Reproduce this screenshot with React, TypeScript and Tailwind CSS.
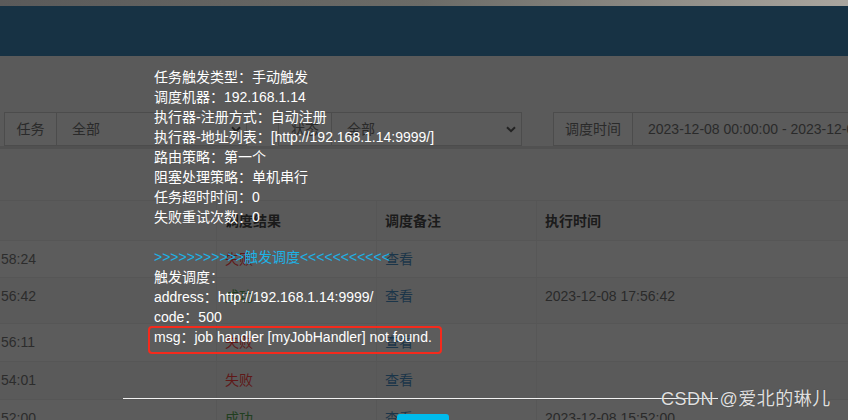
import React from 'react';

const font = { fontFamily: '"Liberation Sans", "Noto Sans CJK SC", sans-serif' };

const rows = [
  { time: '58:24', status: '失败', ok: false, exec: '', h: 'h-[37px]' },
  { time: '56:42', status: '成功', ok: true, exec: '2023-12-08 17:56:42', h: 'h-[46px]' },
  { time: '56:11', status: '失败', ok: false, exec: '', h: 'h-[38px]' },
  { time: '54:01', status: '失败', ok: false, exec: '', h: 'h-[38px]' },
  { time: '52:00', status: '成功', ok: true, exec: '2023-12-08 15:52:00', h: 'h-[40px]' },
];

const tipLines = [
  '任务触发类型：手动触发',
  '调度机器：192.168.1.14',
  '执行器-注册方式：自动注册',
  '执行器-地址列表：[http://192.168.1.14:9999/]',
  '路由策略：第一个',
  '阻塞处理策略：单机串行',
  '任务超时时间：0',
  '失败重试次数：0',
];

function Chevron() {
  return (
    <svg width="10" height="7" viewBox="0 0 10 7" className="shrink-0">
      <path d="M1 1.2 L5 5.2 L9 1.2" fill="none" stroke="#222" strokeWidth="2" />
    </svg>
  );
}

function Group({ label, value, width, select, addonW }: { label: string; value: string; width: string; select?: boolean; addonW: string }) {
  return (
    <div className={`flex h-[34px] ${width} shrink-0`}>
      <div className={`${addonW} flex items-center justify-center border border-[#4c4c4c] bg-[#5c5c5c] text-[#2a2a2a]`}>{label}</div>
      <div className="flex flex-1 items-center justify-between border border-l-0 border-[#4c4c4c] bg-[#5b5b5b] pl-[15px] pr-[5px] text-[#2a2a2a] whitespace-nowrap overflow-hidden">
        <span>{value}</span>
        {select && <Chevron />}
      </div>
    </div>
  );
}

export default function App() {
  return (
    <div className="relative w-[848px] h-[420px] overflow-hidden bg-[#5a5a5a] text-[14px] leading-[20px]" style={font}>
      <div className="h-[6px] bg-gradient-to-r from-[#5a5a5a] via-[#6b6b67] to-[#aaa69f]" />
      <div className="h-[50px] bg-[#173244]" />

      {/* filters */}
      <div className="flex pt-[56px] pl-[4px]">
        <Group label="任务" value="全部" width="w-[243px]" addonW="w-[53px]" select />
        <div className="w-[31px] shrink-0" />
        <Group label="状态" value="全部" width="w-[244px]" addonW="w-[54px]" select />
        <div className="w-[31px] shrink-0" />
        <Group label="调度时间" value="2023-12-08 00:00:00 - 2023-12-08 23:59:59" width="w-[420px]" addonW="w-[80px]" />
      </div>
      <div className="h-[3px] bg-[#515151]" />

      {/* table */}
      <div className="mt-[51px]">
        <div className="flex h-[40px] items-center border-t border-[#555] font-bold text-[#1b1b1b]">
          <div className="w-[216px]" />
          <div className="w-[160px] pl-[8px] border-l border-[#565656] h-full flex items-center">调度结果</div>
          <div className="w-[160px] pl-[8px] border-l border-[#565656] h-full flex items-center">调度备注</div>
          <div className="flex-1 pl-[8px] border-l border-[#565656] h-full flex items-center">执行时间</div>
        </div>
        {rows.map((r, i) => (
          <div key={i} className={`flex ${r.h} border-t border-[#565656] ${i % 2 === 0 ? 'bg-[#5c5c5c]' : 'bg-[#5a5a5a]'}`}>
            <div className="w-[216px] pl-[1px] pt-[8px] text-[#2c2c2c]">{r.time}</div>
            <div className={`w-[160px] pl-[8px] pt-[8px] border-l border-[#575757] ${r.ok ? 'text-[#213f20]' : 'text-[#5f1818]'}`}>{r.status}</div>
            <div className="w-[160px] pl-[8px] pt-[8px] border-l border-[#575757] text-[#1b3549]">查看</div>
            <div className="flex-1 pl-[8px] pt-[8px] border-l border-[#575757] text-[#2a2a2a]">{r.exec}</div>
          </div>
        ))}
      </div>

      {/* tip text over the dimmed page */}
      <div className="absolute left-[154px] top-[67px] text-white whitespace-nowrap">
        {tipLines.map((l) => (
          <div key={l}>{l}</div>
        ))}
        <div className="h-[20px]" />
        <div className="text-[#1cb2e6]">{'>>>>>>>>>>>'}触发调度{'<<<<<<<<<<<'}</div>
        <div>触发调度：</div>
        <div>address：http://192.168.1.14:9999/</div>
        <div>code：500</div>
        <div>msg：job handler [myJobHandler] not found.</div>
      </div>
      <div className="absolute left-[148px] top-[326px] w-[294px] h-[28px] rounded-[4px] border-2 border-[#f52a1c]" />

      <div className="absolute left-[123px] top-[398px] w-[595px] h-px bg-[#f2f2f2]" />
      <div className="absolute left-[397px] top-[414px] w-[52px] h-[10px] rounded-t-[3px] bg-[#00bbec]" />

      <div className="absolute left-[661px] top-[387px] text-[18px] leading-[24px] tracking-[0.5px] text-white/85 whitespace-nowrap [text-shadow:0_0_1px_rgba(0,0,0,0.6)]">
        CSDN @爱北的琳儿
      </div>
    </div>
  );
}
